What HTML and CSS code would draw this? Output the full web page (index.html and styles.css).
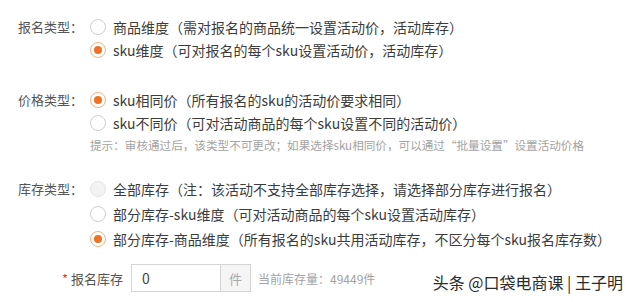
FILE: index.html
```html
<!DOCTYPE html>
<html lang="zh-CN">
<head>
    <meta charset="UTF-8">
    <title>报名设置</title>
    <link rel="stylesheet" href="styles.css">
</head>
<body>
    <div class="form">
        <div class="field group-sign">
            <div class="label">报名类型：</div>
            <div class="options">
                <div class="option"><span class="radio"></span>商品维度（需对报名的商品统一设置活动价，活动库存）</div>
                <div class="option"><span class="radio checked"></span>sku维度（可对报名的每个sku设置活动价，活动库存）</div>
            </div>
        </div>

        <div class="field group-price">
            <div class="label">价格类型：</div>
            <div class="options">
                <div class="option"><span class="radio checked"></span>sku相同价（所有报名的sku的活动价要求相同）</div>
                <div class="option"><span class="radio"></span>sku不同价（可对活动商品的每个sku设置不同的活动价）</div>
                <div class="hint">提示：审核通过后，该类型不可更改；如果选择sku相同价，可以通过“批量设置”设置活动价格</div>
            </div>
        </div>

        <div class="field group-stock">
            <div class="label">库存类型：</div>
            <div class="options">
                <div class="option"><span class="radio disabled"></span>全部库存（注：该活动不支持全部库存选择，请选择部分库存进行报名）</div>
                <div class="option"><span class="radio"></span>部分库存-sku维度（可对活动商品的每个sku设置活动库存）</div>
                <div class="option"><span class="radio checked"></span>部分库存-商品维度（所有报名的sku共用活动库存，不区分每个sku报名库存数）</div>
            </div>
        </div>

        <div class="stock-row">
            <div class="stock-label"><span class="required">*</span>报名库存</div>
            <div class="input-group">
                <input class="stock-input" type="text" value="0">
                <span class="addon">件</span>
            </div>
            <div class="stock-tip">当前库存量：49449件</div>
        </div>
    </div>

    <div class="watermark">头条 @口袋电商课 | 王子明</div>
</body>
</html>
```

FILE: styles.css
```css
body { margin: 0; background: #fff; font-family: "Noto Sans CJK SC", "Microsoft YaHei", sans-serif; color: #3c3c3c; position: relative; width: 633px; height: 302px; overflow: hidden; }
.form { padding-top: 15px; }
.field { display: flex; }
.label { width: 72px; padding-left: 18px; font-size: 13px; line-height: 23px; color: #555; }
.options { display: flex; flex-direction: column; }
.option { display: flex; align-items: center; height: 23px; font-size: 14px; white-space: nowrap; }
.group-sign { margin-bottom: 27px; }
.group-price { margin-bottom: 19px; }
.group-stock { margin-bottom: 13px; }
.group-stock .option { height: 25px; }
.group-stock .label { line-height: 25px; }
.hint { height: 23px; line-height: 23px; font-size: 11.6px; color: #a3a3a3; white-space: nowrap; }
.radio { box-sizing: border-box; width: 16px; height: 16px; border: 1px solid #cfcfcf; border-radius: 50%; margin-right: 7px; background: #fff; display: inline-flex; align-items: center; justify-content: center; flex-shrink: 0; }
.radio.checked { border-color: #f2b183; }
.radio.checked::after { content: ""; width: 8px; height: 8px; border-radius: 50%; background: #ed7223; }
.radio.disabled { background: #f3f3f3; border-color: #e2e2e2; }
.stock-row { display: flex; align-items: center; height: 28px; }
.stock-label { width: 123px; margin-right: 8px; text-align: right; font-size: 13px; color: #555; }
.required { color: #e4393c; margin-right: 3px; }
.input-group { display: flex; height: 28px; }
.stock-input { box-sizing: border-box; width: 89px; height: 28px; border: 1px solid #d4d4d4; border-right: none; padding: 0 10px; font-size: 14px; font-family: inherit; color: #444; outline: none; }
.addon { box-sizing: border-box; width: 31px; height: 28px; border: 1px solid #d4d4d4; background: #f5f5f5; color: #aaa; font-size: 13px; display: flex; align-items: center; justify-content: center; }
.stock-tip { margin-left: 7px; font-size: 12px; color: #a3a3a3; }
.watermark { position: absolute; right: 10px; bottom: 8px; font-size: 16px; color: #2b2b2b; white-space: nowrap; }
```
